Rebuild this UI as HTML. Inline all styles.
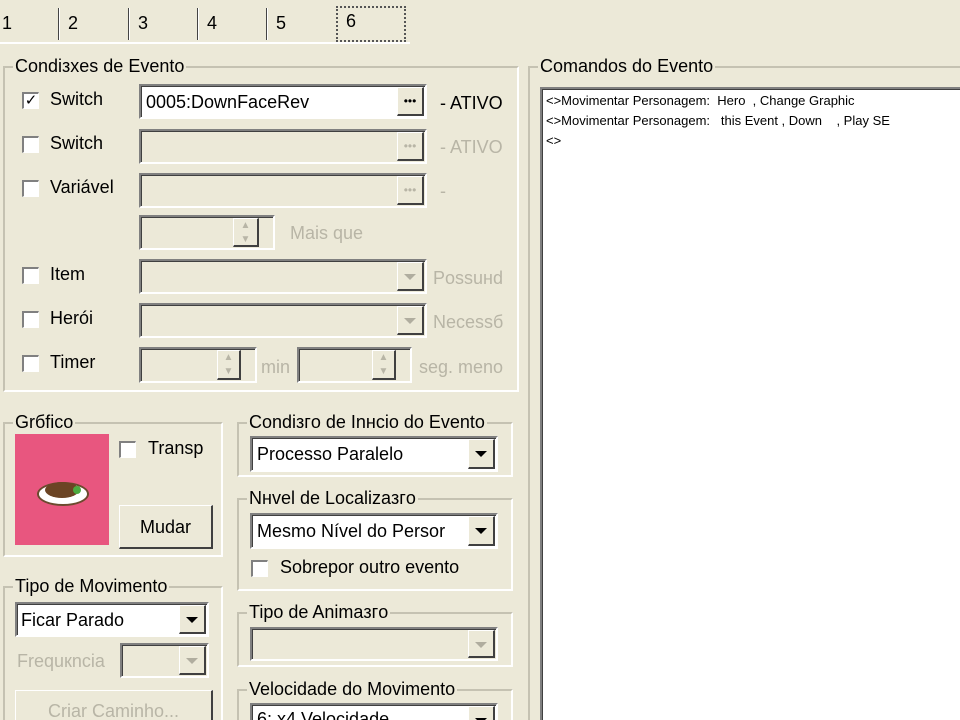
<!DOCTYPE html>
<html style="width:960px;height:720px;overflow:hidden"><head><meta charset="utf-8"><style>
*{box-sizing:border-box;margin:0;padding:0}
body{width:960px;height:720px;overflow:hidden;background:#ece9d8;font-family:"Liberation Sans",sans-serif;font-size:18px;color:#000;position:relative}
.a{position:absolute;white-space:nowrap}
.g{position:absolute;border:2px solid;border-color:#c5c2b2 #fff #fff #c5c2b2}
.gt{position:absolute;background:#ece9d8;padding:0 2px;top:-13px;left:8px;line-height:22px}
.in{position:absolute;background:#fff;border-top:2px solid #808080;border-left:2px solid #808080;border-right:2px solid #fff;border-bottom:2px solid #fff;box-shadow:inset 1px 1px 0 #404040}
.dis{background:#ece9d8}
.btn{position:absolute;right:1px;top:1px;bottom:1px;width:27px;background:#ece9d8;border-right:2px solid #404040;border-bottom:2px solid #404040;border-top:1px solid #fff;border-left:1px solid #fff;font-size:12px;text-align:center;line-height:26px}
.cb{position:absolute;width:17px;height:17px;background:#fff;border-top:2px solid #808080;border-left:2px solid #808080;border-right:1px solid #fff;border-bottom:1px solid #fff;font-size:15px;line-height:14px;text-align:center}
.gr{color:#b8b5a6}
.tri{display:inline-block;width:0;height:0;border-left:6px solid transparent;border-right:6px solid transparent;border-top:6px solid #000;vertical-align:middle}
.tri.d{border-top-color:#b0ad9f}
.sep{position:absolute;top:8px;width:2px;height:32px;background:#444;border-right:1px solid #fff}
.pb{position:absolute;background:#ece9d8;border-top:1px solid #fff;border-left:1px solid #fff;border-right:2px solid #404040;border-bottom:2px solid #404040;text-align:center}
</style></head><body>
<div class="a" style="left:2px;top:13px">1</div>
<div class="sep" style="left:58px"></div><div class="a" style="left:68px;top:13px">2</div>
<div class="sep" style="left:128px"></div><div class="a" style="left:138px;top:13px">3</div>
<div class="sep" style="left:197px"></div><div class="a" style="left:207px;top:13px">4</div>
<div class="sep" style="left:266px"></div><div class="a" style="left:276px;top:13px">5</div>
<div class="a" style="left:336px;top:6px;width:70px;height:36px;border:2px dotted #555;padding-left:8px;line-height:26px">6</div>
<div class="a" style="left:0;top:42px;width:410px;height:2px;background:#fff"></div>

<div class="g" style="left:3px;top:66px;width:516px;height:326px"><div class="gt">Condiзxes de Evento</div></div>
<div class="cb" style="left:22px;top:92px">✓</div><div class="a" style="left:50px;top:89px">Switch</div>
<div class="in" style="left:139px;top:84px;width:288px;height:35px"><span class="a" style="left:5px;top:6px">0005:DownFaceRev</span><div class="btn">•••</div></div>
<div class="a" style="left:440px;top:93px">- ATIVO</div>

<div class="cb" style="left:22px;top:136px"></div><div class="a" style="left:50px;top:133px">Switch</div>
<div class="in dis" style="left:139px;top:129px;width:288px;height:35px"><div class="btn gr">•••</div></div>
<div class="a gr" style="left:440px;top:137px">- ATIVO</div>

<div class="cb" style="left:22px;top:180px"></div><div class="a" style="left:50px;top:177px">Variável</div>
<div class="in dis" style="left:139px;top:173px;width:288px;height:35px"><div class="btn gr">•••</div></div>
<div class="a gr" style="left:440px;top:181px">-</div>

<div class="in dis" style="left:139px;top:215px;width:136px;height:35px"><div class="btn gr" style="right:14px;width:26px;font-size:10px;line-height:14px">▲<br>▼</div></div>
<div class="a gr" style="left:290px;top:223px">Mais que</div>

<div class="cb" style="left:22px;top:267px"></div><div class="a" style="left:50px;top:264px">Item</div>
<div class="in dis" style="left:139px;top:259px;width:288px;height:35px"><div class="btn"><span class="tri d"></span></div></div>
<div class="a gr" style="left:433px;top:268px">Possuнd</div>

<div class="cb" style="left:22px;top:311px"></div><div class="a" style="left:50px;top:308px">Herói</div>
<div class="in dis" style="left:139px;top:303px;width:288px;height:35px"><div class="btn"><span class="tri d"></span></div></div>
<div class="a gr" style="left:433px;top:312px">Necessб</div>

<div class="cb" style="left:22px;top:355px"></div><div class="a" style="left:50px;top:352px">Timer</div>
<div class="in dis" style="left:139px;top:347px;width:118px;height:36px"><div class="btn gr" style="right:14px;width:24px;font-size:10px;line-height:14px">▲<br>▼</div></div>
<div class="a gr" style="left:261px;top:357px">min</div>
<div class="in dis" style="left:297px;top:347px;width:115px;height:36px"><div class="btn gr" style="right:14px;width:24px;font-size:10px;line-height:14px">▲<br>▼</div></div>
<div class="a gr" style="left:419px;top:357px">seg. meno</div>

<div class="g" style="left:3px;top:422px;width:220px;height:135px"><div class="gt">Grбfico</div></div>
<div class="a" style="left:15px;top:434px;width:94px;height:111px;background:#e8567f">
<div class="a" style="left:22px;top:48px;width:52px;height:24px;border-radius:50%;background:#fff;border:2px solid #6b4a2e"></div>
<div class="a" style="left:30px;top:48px;width:34px;height:16px;border-radius:50%;background:#6b4424"></div>
<div class="a" style="left:58px;top:52px;width:8px;height:8px;border-radius:50%;background:#4caa40"></div>
</div>
<div class="cb" style="left:119px;top:441px"></div><div class="a" style="left:148px;top:438px">Transp</div>
<div class="pb" style="left:119px;top:505px;width:94px;height:44px;line-height:42px">Mudar</div>

<div class="g" style="left:3px;top:586px;width:220px;height:160px"><div class="gt">Tipo de Movimento</div></div>
<div class="in" style="left:15px;top:602px;width:194px;height:35px"><span class="a" style="left:4px;top:6px">Ficar Parado</span><div class="btn"><span class="tri"></span></div></div>
<div class="a gr" style="left:17px;top:651px">Frequкncia</div>
<div class="in dis" style="left:120px;top:643px;width:89px;height:35px"><div class="btn"><span class="tri d"></span></div></div>
<div class="pb gr" style="left:15px;top:690px;width:198px;height:44px;line-height:40px">Criar Caminho...</div>

<div class="g" style="left:237px;top:422px;width:276px;height:55px"><div class="gt">Condiзгo de Inнcio do Evento</div></div>
<div class="in" style="left:250px;top:436px;width:248px;height:36px"><span class="a" style="left:5px;top:6px">Processo Paralelo</span><div class="btn"><span class="tri"></span></div></div>

<div class="g" style="left:237px;top:498px;width:276px;height:93px"><div class="gt">Nнvel de Localizaзгo</div></div>
<div class="in" style="left:250px;top:513px;width:248px;height:36px"><span class="a" style="left:5px;top:6px">Mesmo Nível do Persor</span><div class="btn"><span class="tri"></span></div></div>
<div class="cb" style="left:251px;top:560px"></div><div class="a" style="left:280px;top:557px">Sobrepor outro evento</div>

<div class="g" style="left:237px;top:612px;width:276px;height:55px"><div class="gt">Tipo de Animaзгo</div></div>
<div class="in dis" style="left:250px;top:627px;width:248px;height:34px"><div class="btn"><span class="tri d"></span></div></div>

<div class="g" style="left:237px;top:689px;width:276px;height:60px"><div class="gt">Velocidade do Movimento</div></div>
<div class="in" style="left:250px;top:703px;width:248px;height:36px"><span class="a" style="left:5px;top:4px">6: x4 Velocidade</span><div class="btn"><span class="tri"></span></div></div>

<div class="g" style="left:528px;top:66px;width:440px;height:670px"><div class="gt">Comandos do Evento</div></div>
<div class="in" style="left:540px;top:87px;width:430px;height:650px;font-size:13px;line-height:20px;padding:2px 4px">
<div>&lt;&gt;Movimentar Personagem:&nbsp; Hero&nbsp; , Change Graphic</div>
<div>&lt;&gt;Movimentar Personagem:&nbsp;&nbsp; this Event , Down&nbsp;&nbsp;&nbsp; , Play SE</div>
<div>&lt;&gt;</div>
</div>
</body></html>
